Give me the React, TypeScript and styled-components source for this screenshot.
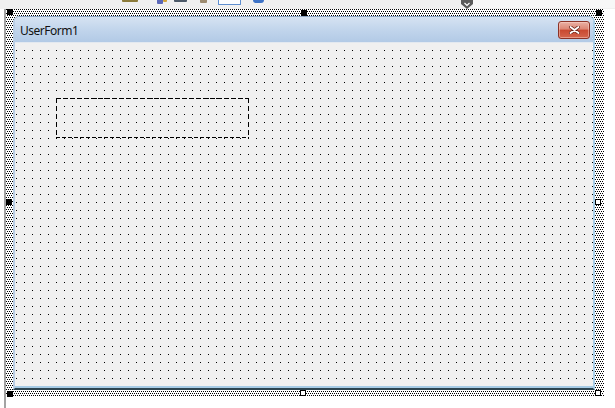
import styled, { createGlobalStyle } from 'styled-components';

const GlobalStyle = createGlobalStyle`
  html, body {
    margin: 0;
    padding: 0;
    background: #ffffff;
  }
  body {
    width: 615px;
    height: 408px;
    overflow: hidden;
    font-family: 'Noto Sans', 'DejaVu Sans', sans-serif;
  }
`;

type Stub = { gap: number; w: number; h: number; color: string; outline?: boolean; round?: boolean };

// bottoms of the toolbar buttons that peek in above the designer
const stubs: Stub[] = [
  { gap: 122, w: 16, h: 2, color: '#8d7c3c' },
  { gap: 19, w: 6, h: 4, color: '#5c68b8' },
  { gap: 0, w: 4, h: 2, color: '#d3a43c' },
  { gap: 7, w: 13, h: 2, color: '#4c5968' },
  { gap: 13, w: 7, h: 3, color: '#9d8b70' },
  { gap: 11, w: 23, h: 5, color: '#5f8fd0', outline: true },
  { gap: 12, w: 11, h: 3, color: '#3d72c6', round: true },
];

const App = () => {
  return (
    <>
      <GlobalStyle />
      <Page>
        <Toolbar>
          {stubs.map((s, i) => (
            <ToolStub key={i} $gap={s.gap} $w={s.w} $h={s.h} $color={s.color} $outline={s.outline} $round={s.round} />
          ))}
          <DropArrow>
            <svg width="12" height="9" viewBox="0 0 12 9">
              <path d="M0 0 H12 V4 L6 9 L0 4 Z" fill="#5a5a5a" />
              <path d="M3.5 3 L6 5.5 L8.5 3" fill="none" stroke="#ffffff" strokeWidth="1.2" />
            </svg>
          </DropArrow>
          <LightPart />
        </Toolbar>
        <Workspace>
          <Gutter />
          <Ruler />
          <SelectionFrame>
            <Handle $top={0} $left={1} $filled />
            <Handle $top={1} $left={295} $filled />
            <Handle $top={1} $left={590} $filled />
            <Handle $top={190} $left={0} $filled />
            <Handle $top={190} $left={589} />
            <Handle $top={382} $left={1} $filled />
            <Handle $top={381} $left={294} />
            <Handle $top={381} $left={589} />
            <FormWindow>
              <TitleBar>
                <Caption>UserForm1</Caption>
                <CloseButton>
                  <svg width="11" height="8" viewBox="0 0 11 8">
                    <path d="M1.5 1 L9.5 7 M9.5 1 L1.5 7" stroke="#6b2419" strokeWidth="3.4" strokeLinecap="round" />
                    <path d="M1.5 1 L9.5 7 M9.5 1 L1.5 7" stroke="#ffffff" strokeWidth="1.8" strokeLinecap="round" />
                  </svg>
                </CloseButton>
              </TitleBar>
              <FormBody>
                <LabelControl />
              </FormBody>
            </FormWindow>
          </SelectionFrame>
        </Workspace>
      </Page>
    </>
  );
};

export default App;

// Styling

const Page = styled.div`
  width: 615px;
  height: 408px;
  display: flex;
  flex-direction: column;
  background: #ffffff;
`;

const Toolbar = styled.div`
  height: 9px;
  flex: none;
  display: flex;
  align-items: flex-start;
  background: #f0f0f0;
  overflow: hidden;
`;

const ToolStub = styled.div<{ $gap: number; $w: number; $h: number; $color: string; $outline?: boolean; $round?: boolean }>`
  flex: none;
  margin-left: ${(p) => p.$gap}px;
  width: ${(p) => p.$w}px;
  height: ${(p) => p.$h}px;
  box-sizing: border-box;
  background: ${(p) => (p.$outline ? '#fbfcfe' : p.$color)};
  border: ${(p) => (p.$outline ? `1px solid ${p.$color}` : 'none')};
  border-top: none;
  border-radius: ${(p) => (p.$round ? '0 0 6px 6px' : '0 0 1px 1px')};
`;

const DropArrow = styled.div`
  flex: none;
  margin-left: 197px;
  width: 12px;
  height: 9px;
  display: flex;
`;

const LightPart = styled.div`
  flex: 1;
  height: 8px;
  background: #f7f7f7;
`;

const Workspace = styled.div`
  flex: 1;
  display: flex;
  align-items: flex-start;
`;

const Gutter = styled.div`
  width: 4px;
  flex: none;
`;

const Ruler = styled.div`
  width: 2px;
  height: 399px;
  flex: none;
  background: #a3a3a3;
`;

const SelectionFrame = styled.div`
  position: relative;
  flex: none;
  width: 598px;
  height: 388px;
  box-sizing: border-box;
  padding: 7px 9px 7px 7px;
  background-color: #ffffff;
  background-image:
    conic-gradient(at 1px 1px, transparent 75%, #000000 0),
    conic-gradient(at 1px 1px, transparent 75%, #000000 0);
  background-size: 2px 4px, 2px 4px;
  background-position: 0 0, 1px 2px;
`;

const Handle = styled.div<{ $top: number; $left: number; $filled?: boolean }>`
  position: absolute;
  top: ${(p) => p.$top}px;
  left: ${(p) => p.$left}px;
  width: 6px;
  height: 6px;
  box-sizing: border-box;
  background: ${(p) => (p.$filled ? '#000000' : '#ffffff')};
  border: 1px solid #000000;
  z-index: 1;
`;

const FormWindow = styled.div`
  width: 582px;
  height: 374px;
  box-sizing: border-box;
  display: flex;
  flex-direction: column;
  border: 2px solid #a9cfe9;
  border-left-color: #b9cde3;
  border-top: 1px solid #8fa9c7;
  border-bottom: 2px solid #2c4450;
  border-radius: 6px 6px 0 0;
  overflow: hidden;
  background: #f0f0f0;
`;

const TitleBar = styled.div`
  height: 25px;
  flex: none;
  display: flex;
  align-items: center;
  justify-content: space-between;
  padding: 0 3px 0 5px;
  background: linear-gradient(#d6e3f2, #c0d4eb 55%, #b2cae6);
`;

const Caption = styled.span`
  font-size: 12px;
  letter-spacing: -0.5px;
  color: #111111;
  padding-top: 2px;
`;

const CloseButton = styled.div`
  width: 32px;
  height: 18px;
  margin-top: 1px;
  box-sizing: border-box;
  display: flex;
  align-items: center;
  justify-content: center;
  border: 1px solid #8c3226;
  border-radius: 3px;
  background: linear-gradient(#eab1a4, #dc8574 45%, #c9482f 50%, #d4664e);
  box-shadow: inset 0 0 0 1px rgba(255, 220, 210, 0.45);
`;

const FormBody = styled.div`
  position: relative;
  flex: 1;
  border-top: 1px solid #e3e9f0;
  border-bottom: 2px solid #a6cbe5;
  background-color: #f0f0f0;
  background-image: conic-gradient(at 1px 1px, transparent 75%, #000000 0);
  background-size: 8px 8px;
  background-position: 1px 7px;
`;

const LabelControl = styled.div`
  position: absolute;
  left: 41px;
  top: 55px;
  width: 193px;
  height: 40px;
  background:
    repeating-linear-gradient(90deg, #000 0 5px, transparent 5px 7px) top left / 100% 1px no-repeat,
    repeating-linear-gradient(90deg, #000 0 4px, transparent 4px 6px) bottom left / 100% 1px no-repeat,
    repeating-linear-gradient(180deg, #000 0 5px, transparent 5px 8px) top left / 1px 100% no-repeat,
    repeating-linear-gradient(180deg, #000 0 5px, transparent 5px 8px) top right / 1px 100% no-repeat;
`;
